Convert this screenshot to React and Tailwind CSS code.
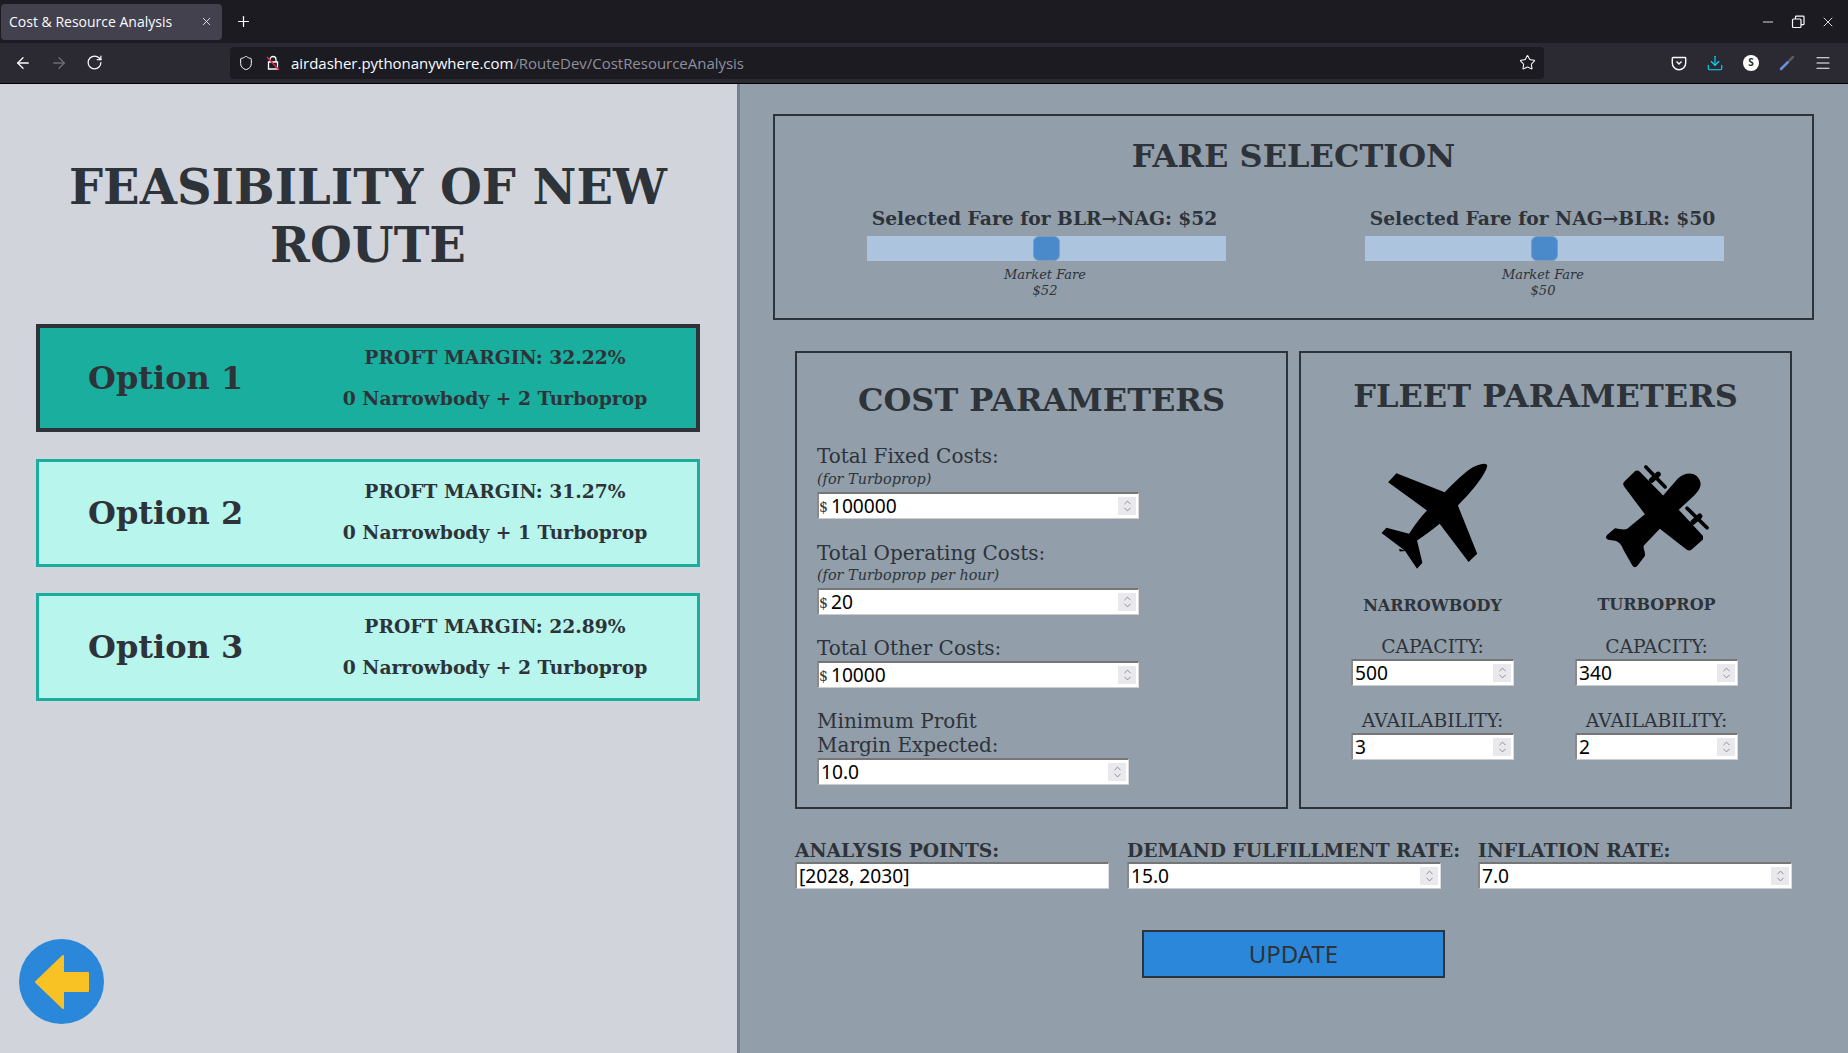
import React from 'react';
import { ArrowLeft, ArrowRight, RotateCw, Shield, Star, X, Plus, Minus, Download, Menu, ChevronUp, ChevronDown } from 'lucide-react';

const serif = 'font-["DejaVu_Serif",serif]';

const options = [
  { name: 'Option 1', margin: '32.22%', mix: '0 Narrowbody + 2 Turboprop', active: true },
  { name: 'Option 2', margin: '31.27%', mix: '0 Narrowbody + 1 Turboprop' },
  { name: 'Option 3', margin: '22.89%', mix: '0 Narrowbody + 2 Turboprop' },
];

const Spinner = () => (
  <span className="flex h-[18px] w-[18px] shrink-0 flex-col items-center justify-center bg-[#e9e9ed] text-[#77777f]">
    <ChevronUp className="-mb-[2px] h-[11px] w-[11px]" strokeWidth={1.75} />
    <ChevronDown className="-mt-[2px] h-[11px] w-[11px]" strokeWidth={1.75} />
  </span>
);

// number field with the firefox style spinner
const NumberField = ({ value, prefix, spinner = true, className = '' }) => (
  <div className={`flex h-[27px] items-center border-t-2 border-l-2 border-t-[#767676] border-l-[#8a8a8a] border-r border-b border-r-[#dddddd] border-b-[#cccccc] bg-white pr-[2px] ${className}`}>
    {prefix && <span className={`${serif} mr-[3px] mt-[2px] text-[14px] leading-none text-[#2d3339]`}>$</span>}
    <span className={`flex-1 font-["Noto_Sans",sans-serif] text-[19.2px] leading-none text-black ${prefix ? '' : 'pl-[2px]'}`}>{value}</span>
    {spinner && <Spinner />}
  </div>
);

const FareSlider = ({ route, fare, left }) => (
  <div className="flex w-[359px] flex-col items-center">
    <div className={`${serif} whitespace-nowrap pr-[4px] text-[18.72px] font-bold leading-[24px] text-[#2d3339]`}>Selected Fare for {route}: ${fare}</div>
    <div className="relative mt-[6px] h-[25px] w-full bg-[#adc4de]">
      <div className="absolute top-0 h-[25px] w-[27px] rounded-[6px] border border-[#7f9dbd] bg-[#4a8acb]" style={{ left }} />
    </div>
    <div className={`${serif} mt-[6px] pr-[3px] text-center text-[13px] italic leading-[16px] text-[#2d3339]`}>
      Market Fare
      <br />${fare}
    </div>
  </div>
);

const CostField = ({ label, sub, subClass = 'mt-[2px]', value, prefix = true, className = '', fieldClass = 'w-[322px]' }) => (
  <div className={className}>
    <div className={`${serif} text-[20px] leading-[24px] text-[#2d3339] ${sub ? '' : 'mb-[1px]'}`}>{label}</div>
    {sub && <div className={`${serif} mb-[5px] text-[14.4px] italic leading-[16px] text-[#2d3339] ${subClass}`}>{sub}</div>}
    <NumberField value={value} prefix={prefix} className={fieldClass} />
  </div>
);

const NarrowbodyIcon = () => (
  <svg viewBox="100 60 360 340" className="h-[113px] w-[120px]" fill="#000">
    <path d="M443 82 C445 70 425 72 400 85 C375 100 345 130 315 160 L170 103 L145 130 L262 215 C245 232 225 258 208 285 L140 267 L125 283 L195 335 L178 330 L180 338 L196 337 L232 390 L248 372 L232 305 C255 290 280 272 300 255 L387 370 L413 345 L355 200 C385 170 435 115 443 82 Z" />
  </svg>
);

const TurbopropIcon = () => (
  <svg viewBox="780 60 340 340" className="h-[113px] w-[113px]" fill="#000" stroke="#000" strokeLinecap="round">
    <path strokeWidth="0" d="M1015 118 C1040 95 1075 100 1082 130 C1085 145 1075 158 1065 168 L1017 213 L1090 292 L1090 302 L1055 333 C1050 337 1045 335 1040 332 L960 270 L912 320 C908 330 918 340 915 352 L892 382 C886 388 880 386 876 378 L850 332 C845 318 838 310 825 306 L805 303 C797 300 796 294 802 288 L825 268 C835 268 850 275 862 270 L915 226 L852 142 C848 136 850 130 855 126 L885 97 C890 93 895 94 900 98 L970 170 Z" />
    <path fill="none" strokeWidth="11" d="M918 84 L976 144" />
    <path fill="none" strokeWidth="16" d="M935 124 L955 106" />
    <path fill="none" strokeWidth="11" d="M1042 208 L1102 267" />
    <path fill="none" strokeWidth="16" d="M1060 250 L1080 232" />
  </svg>
);

const FleetColumn = ({ icon, name, capacity, availability, nameClass = 'leading-[22px]' }) => (
  <div className="flex w-[163px] flex-col items-center">
    <div className="flex h-[113px] items-center justify-center">{icon}</div>
    <div className={`${serif} mt-[23px] whitespace-nowrap text-[16px] font-bold text-[#2d3339] ${nameClass}`}>{name}</div>
    <div className={`${serif} mt-[18px] whitespace-nowrap text-[18.72px] leading-[24px] text-[#2d3339]`}>CAPACITY:</div>
    <NumberField value={capacity} className="w-full" />
    <div className={`${serif} mt-[23px] whitespace-nowrap text-[18.72px] leading-[24px] text-[#2d3339]`}>AVAILABILITY:</div>
    <NumberField value={availability} className="w-full" />
  </div>
);

const BottomField = ({ label, value, spinner }) => (
  <div>
    <div className={`${serif} mb-[1px] whitespace-nowrap text-[18.72px] font-bold leading-[22px] text-[#2d3339]`}>{label}</div>
    <NumberField value={value} spinner={spinner} className="w-[314px]" />
  </div>
);

const BrowserChrome = () => (
  <div className="h-[84px] shrink-0 bg-[#1c1b22] font-['Open_Sans',sans-serif]">
    <div className="flex h-[43px] items-center">
      <div className="ml-[1px] flex h-[36px] w-[221px] items-center justify-between rounded-[4px] bg-[#42414d] pl-[8px] pr-[9px] text-[14px] text-[#fbfbfe]">
        <span>Cost &amp; Resource Analysis</span>
        <X className="h-[13px] w-[13px]" strokeWidth={1.5} />
      </div>
      <Plus className="ml-[13px] h-[17px] w-[17px] text-[#fbfbfe]" strokeWidth={1.75} />
      <div className="ml-auto flex items-center gap-[14px] pr-[12px] text-[#fbfbfe]">
        <Minus className="h-4 w-4" strokeWidth={1.25} />
        <svg viewBox="0 0 16 16" className="h-4 w-4" fill="none" stroke="currentColor" strokeWidth="1.2">
          <rect x="2.5" y="5" width="8.5" height="8.5" rx="1" />
          <path d="M5.5 5V3a.8.8 0 0 1 .8-.8h6.9a.8.8 0 0 1 .8.8v6.9a.8.8 0 0 1-.8.8H11" />
        </svg>
        <X className="h-4 w-4" strokeWidth={1.25} />
      </div>
    </div>
    <div className="flex h-[41px] items-center border-b border-black bg-[#2b2a33] pb-[1px] text-[#fbfbfe]">
      <ArrowLeft className="ml-[14px] h-[18px] w-[18px]" strokeWidth={1.75} />
      <ArrowRight className="ml-[18px] h-[18px] w-[18px] text-[#6f6e75]" strokeWidth={1.75} />
      <RotateCw className="ml-[18px] h-[17px] w-[17px]" strokeWidth={1.75} />
      <div className="ml-[127px] flex h-[32px] w-[1314px] items-center rounded-[4px] bg-[#1c1b22] pl-[8px] pr-[8px]">
        <Shield className="h-4 w-4" strokeWidth={1.5} />
        <svg viewBox="0 0 16 16" className="ml-[11px] h-4 w-4" fill="none" strokeWidth="1.3">
          <path stroke="#fbfbfe" d="M5 7V4.5a3 3 0 0 1 6 0V7M3.5 7h9v7h-9z" />
          <path stroke="#e22850" d="M2 2l12 13" strokeWidth="1.5" />
        </svg>
        <span className="ml-[10px] pt-[2px] text-[15px] tracking-[-0.02px] text-[#fbfbfe]">
          airdasher.pythonanywhere.com<span className="text-[#8f8f9d]">/RouteDev/CostResourceAnalysis</span>
        </span>
        <Star className="ml-auto h-[17px] w-[17px]" strokeWidth={1.5} />
      </div>
      <svg viewBox="0 0 16 16" className="ml-[127px] h-4 w-4" fill="none" stroke="currentColor" strokeWidth="1.4">
        <path d="M2 2.5h12a.7.7 0 0 1 .7.7V8a6.7 6.7 0 0 1-13.4 0V3.200a.7.7 0 0 1 .7-.7z" />
        <path d="M5.500 6.500 8 9l2.500-2.500" />
      </svg>
      <Download className="ml-[19px] h-[18px] w-[18px] text-[#00ddff]" strokeWidth={1.5} />
      <div className="ml-[19px] flex h-4 w-4 items-center justify-center rounded-full bg-white text-[10px] font-bold text-[#2b2a33]">S</div>
      <svg viewBox="0 0 16 16" className="ml-[20px] h-4 w-4" fill="none" strokeLinecap="round">
        <path d="M2 14 9 7" stroke="#6d8fe0" strokeWidth="2.5" />
        <path d="M10 6l4-4" stroke="#5b5a62" strokeWidth="2.5" />
      </svg>
      <Menu className="ml-[19px] h-[18px] w-[18px]" strokeWidth={1.5} />
    </div>
  </div>
);

export default function App() {
  return (
    <div className="flex h-screen w-full flex-col overflow-hidden">
      <BrowserChrome />
      <div className="flex min-h-0 flex-1">
        {/* Left section - result options */}
        <div className="flex w-[740px] shrink-0 flex-col border-r-[3px] border-[#718096] bg-[#d1d5db] pl-[36px] pr-[37px] pt-[74px]">
          <h1 className={`${serif} text-center text-[48px] font-bold leading-[58px] text-[#2d3339]`}>
            FEASIBILITY OF NEW ROUTE
          </h1>
          <div className="mt-[50px] flex flex-col gap-[26.5px]">
            {options.map((o) => (
              <div
                key={o.name}
                className={`flex h-[108px] items-center justify-between ${o.active ? 'border-4 border-[#2d3339] bg-[#1aae9f] pl-[48px] pr-[31px]' : 'border-[3px] border-[#1aae9f] bg-[#b8f5ed] pl-[49px] pr-[32px]'} ${serif} text-[#2d3339]`}
              >
                <div className="text-[32px] font-bold">{o.name}</div>
                <div className="w-[340px] pb-[2px] text-center text-[18.72px] font-bold leading-[24px]">
                  <div>PROFT MARGIN: {o.margin}</div>
                  <div className="mt-[17px]">{o.mix}</div>
                </div>
              </div>
            ))}
          </div>
          <button className="-ml-[17px] mb-[29px] mt-auto flex h-[85px] w-[85px] items-center justify-center rounded-full bg-[#2b87d9]">
            <svg viewBox="0 0 54 54" className="h-[54px] w-[54px]" fill="#f9c224" stroke="#f9c224" strokeWidth="2" strokeLinejoin="round">
              <path d="M1 27 L28 1 V18 H53 V36 H28 V53 Z" />
            </svg>
          </button>
        </div>

        {/* Right section - parameters */}
        <div className="min-w-0 flex-1 bg-[#929eaa] pl-[33px] pr-[34px] pt-[30px]">
          <div className="h-[206px] border-2 border-[#2d3339] pt-[21px]">
            <h2 className={`${serif} text-center text-[32px] font-bold leading-[38px] text-[#2d3339]`}>FARE SELECTION</h2>
            <div className="mt-[31px] flex justify-center gap-[139px] pl-[4px]">
              <FareSlider route="BLR→NAG" fare="52" left={166} />
              <FareSlider route="NAG→BLR" fare="50" left={166} />
            </div>
          </div>

          <div className="mx-[22px] mt-[31px] grid grid-cols-[493px_493px] gap-[11px]">
            <div className="h-[458px] border-2 border-[#2d3339] pl-[20px] pt-[28px]">
              <h2 className={`${serif} pr-[20px] text-center text-[32px] font-bold leading-[38px] text-[#2d3339]`}>COST PARAMETERS</h2>
              <CostField className="mt-[25px]" label="Total Fixed Costs:" sub="(for Turboprop)" subClass="mt-[3px]" value="100000" />
              <CostField className="mt-[22px]" label="Total Operating Costs:" sub="(for Turboprop per hour)" value="20" />
              <CostField className="mt-[21px]" label="Total Other Costs:" value="10000" />
              <CostField
                className="mt-[21px]"
                label={<>Minimum Profit<br />Margin Expected:</>}
                value="10.0"
                prefix={false}
                fieldClass="w-[312px]"
              />
            </div>
            <div className="h-[458px] border-2 border-[#2d3339] pt-[24px]">
              <h2 className={`${serif} text-center text-[32px] font-bold leading-[38px] text-[#2d3339]`}>FLEET PARAMETERS</h2>
              <div className="mt-[44px] flex justify-center gap-[61px] pr-[2px]">
                <FleetColumn icon={<NarrowbodyIcon />} name="NARROWBODY" capacity="500" availability="3" />
                <FleetColumn icon={<TurbopropIcon />} name="TURBOPROP" capacity="340" availability="2" nameClass="pb-[2px] leading-[20px]" />
              </div>
            </div>
          </div>

          <div className="mx-[22px] mt-[30px] grid grid-cols-[332px_351px_314px]">
            <BottomField label="ANALYSIS POINTS:" value="[2028, 2030]" spinner={false} />
            <BottomField label="DEMAND FULFILLMENT RATE:" value="15.0" spinner />
            <BottomField label="INFLATION RATE:" value="7.0" spinner />
          </div>

          <div className="mt-[41px] flex justify-center">
            <button className="h-[48px] w-[303px] border-2 border-[#2d3339] bg-[#2b87d9] font-['Noto_Sans',sans-serif] text-[24px] text-[#2d3339]">
              UPDATE
            </button>
          </div>
        </div>
      </div>
    </div>
  );
}
